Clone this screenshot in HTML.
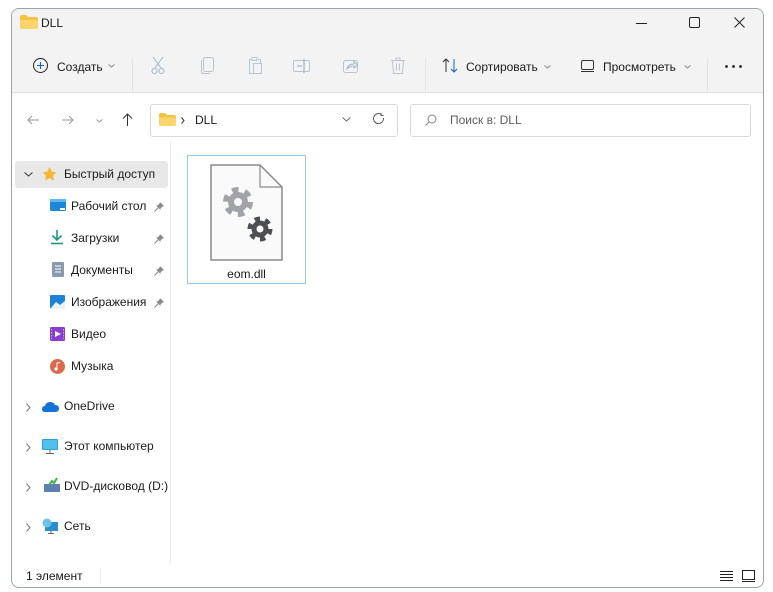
<!DOCTYPE html>
<html><head><meta charset="utf-8"><style>
*{box-sizing:border-box;margin:0;padding:0}
body{width:773px;height:592px;background:#fff;position:relative;overflow:hidden;font-family:"Segoe UI","Liberation Sans",sans-serif;font-size:12px;color:#1a1a1a}
.win{position:absolute;left:11px;top:8px;width:753px;height:580px;border:1px solid #9aa3ab;border-radius:8px;background:#fff;overflow:hidden}
.top{position:absolute;left:0;top:0;width:100%;height:84px;background:#f3f3f3;border-bottom:1px solid #e1e1e1}
.a{position:absolute;white-space:nowrap}
svg{position:absolute;overflow:visible}
.sep{position:absolute;width:1px;background:#e3e3e3}
.box{position:absolute;border:1px solid #d9d9d9;background:#fff;border-radius:3px}
</style></head><body>
<div class="win">
<div class="top"></div>
<svg style="left:8px;top:6px" width="18" height="14"><path d="M0 2 Q0 0 2 0 H6 L8 2 H16 Q18 2 18 4 V12 Q18 14 16 14 H2 Q0 14 0 12Z" fill="#f5c242"/><path d="M0 5 H18 V12 Q18 14 16 14 H2 Q0 14 0 12Z" fill="#fbd56b"/></svg>
<div class="a" style="left:29px;top:7px;font-size:12px">DLL</div>
<svg style="left:624px;top:14px" width="12" height="2"><line x1="0" y1="0.5" x2="11" y2="0.5" stroke="#222"/></svg>
<svg style="left:677px;top:8px" width="11" height="11"><rect x="0.5" y="0.5" width="10" height="10" rx="1.5" fill="none" stroke="#222"/></svg>
<svg style="left:722px;top:8px" width="11" height="11"><path d="M0.5 0.5L10.5 10.5M10.5 0.5L0.5 10.5" stroke="#222"/></svg>
<svg style="left:21px;top:49px" width="15" height="15"><circle cx="7.5" cy="7.5" r="7" fill="none" stroke="#222"/><path d="M7.5 4V11M4 7.5H11" stroke="#0a64c8" stroke-width="1.1"/></svg>
<div class="a" style="left:45px;top:51px">Создать</div>
<svg style="left:96px;top:55px" width="7" height="4"><path d="M0.5 0.5L3.5 3L6.5 0.5" fill="none" stroke="#888"/></svg>
<div class="sep" style="left:120px;top:50px;height:32px"></div>
<svg style="left:139px;top:48px" width="14" height="17"><path d="M2 0L10 11M12 0L4 11" stroke="#9cb6cf"/><circle cx="3.5" cy="14" r="2.5" fill="none" stroke="#9cb6cf"/><circle cx="10.5" cy="14" r="2.5" fill="none" stroke="#9cb6cf"/></svg>
<svg style="left:189px;top:48px" width="13" height="17"><rect x="2.5" y="0.5" width="10" height="14" rx="2" fill="none" stroke="#b8c4d0"/><path d="M0.5 3V15Q0.5 16.5 2 16.5H9" fill="none" stroke="#b8c4d0"/></svg>
<svg style="left:236px;top:48px" width="14" height="17"><path d="M3 2.5H1.5V16.5H5M10 2.5H12.5V6" fill="none" stroke="#b8c4d0"/><rect x="4" y="0.5" width="5" height="3" fill="none" stroke="#b8c4d0"/><rect x="5.5" y="6.5" width="8" height="10" fill="none" stroke="#b8c4d0"/></svg>
<svg style="left:281px;top:50px" width="18" height="14"><rect x="0.5" y="1.5" width="16" height="11" rx="1.5" fill="none" stroke="#b8c4d0"/><path d="M4 7H9M11 0V14" stroke="#9cb6cf" stroke-width="1.2"/></svg>
<svg style="left:331px;top:49px" width="16" height="15"><rect x="0.5" y="2.5" width="14" height="12" rx="2" fill="none" stroke="#b8c4d0"/><path d="M4 11Q5 6 11 6V3.5L14.5 7L11 10V8Q7 8 4 11Z" fill="none" stroke="#9cb6cf"/></svg>
<svg style="left:379px;top:48px" width="14" height="17"><path d="M0 3.5H14M5 3.5V1H9V3.5M1.5 3.5L2.5 16.5H11.5L12.5 3.5M5.5 6.5V13.5M8.5 6.5V13.5" fill="none" stroke="#b8c4d0"/></svg>
<div class="sep" style="left:413px;top:50px;height:32px"></div>
<svg style="left:430px;top:49px" width="17" height="15"><path d="M4 14V1M1 4L4 1L7 4" fill="none" stroke="#333"/><path d="M12 1V14M9 11L12 14L15 11" fill="none" stroke="#0a64c8"/></svg>
<div class="a" style="left:454px;top:51px">Сортировать</div>
<svg style="left:532px;top:56px" width="7" height="4"><path d="M0.5 0.5L3.5 3L6.5 0.5" fill="none" stroke="#888"/></svg>
<svg style="left:569px;top:51px" width="14" height="12"><rect x="0.5" y="0.5" width="12" height="9" rx="1.5" fill="none" stroke="#333"/><line x1="0" y1="11.5" x2="13" y2="11.5" stroke="#333"/></svg>
<div class="a" style="left:591px;top:51px">Просмотреть</div>
<svg style="left:672px;top:56px" width="7" height="4"><path d="M0.5 0.5L3.5 3L6.5 0.5" fill="none" stroke="#888"/></svg>
<div class="sep" style="left:695px;top:50px;height:32px"></div>
<svg style="left:713px;top:56px" width="18" height="3"><circle cx="1.5" cy="1.5" r="1.4" fill="#222"/><circle cx="8.5" cy="1.5" r="1.4" fill="#222"/><circle cx="15.5" cy="1.5" r="1.4" fill="#222"/></svg>
<svg style="left:15px;top:106px" width="13" height="10"><path d="M12 5H1M5 1L1 5L5 9" fill="none" stroke="#999"/></svg>
<svg style="left:50px;top:106px" width="13" height="10"><path d="M0 5H11M7 1L11 5L7 9" fill="none" stroke="#999"/></svg>
<svg style="left:84px;top:110px" width="7" height="4"><path d="M0.5 0.5L3.5 3L6.5 0.5" fill="none" stroke="#999"/></svg>
<svg style="left:110px;top:104px" width="11" height="13"><path d="M5.5 13V1M1 5.5L5.5 1L10 5.5" fill="none" stroke="#333"/></svg>
<div class="box" style="left:138px;top:95px;width:248px;height:33px"></div>
<svg style="left:147px;top:104px" width="17" height="13"><path d="M0 2 Q0 0 2 0 H6 L8 2 H15 Q17 2 17 4 V11 Q17 13 15 13 H2 Q0 13 0 11Z" fill="#f5c242"/><path d="M0 4.5 H17 V11 Q17 13 15 13 H2 Q0 13 0 11Z" fill="#fbd56b"/></svg>
<svg style="left:169px;top:108px" width="4" height="7"><path d="M0.5 0.5L3 3.5L0.5 6.5" fill="none" stroke="#333"/></svg>
<div class="a" style="left:183px;top:104px">DLL</div>
<svg style="left:330px;top:108px" width="9" height="5"><path d="M0.5 0.5L4.5 4L8.5 0.5" fill="none" stroke="#666"/></svg>
<svg style="left:361px;top:104px" width="12" height="12"><path d="M10.5 5A5 5 0 1 1 8 1.2M8 0V2.5H10.5" fill="none" stroke="#555"/></svg>
<div class="box" style="left:398px;top:95px;width:341px;height:33px"></div>
<svg style="left:413px;top:105px" width="12" height="12"><circle cx="7" cy="5" r="4" fill="none" stroke="#888"/><path d="M4 8L0.5 11.5" stroke="#888"/></svg>
<div class="a" style="left:438px;top:104px;color:#5d5d5d">Поиск в: DLL</div>
<div class="sep" style="left:158px;top:132px;height:423px;background:#ececec"></div>
<div class="a" style="left:3px;top:152px;width:153px;height:27px;background:#e8e8e8;border-radius:3px"></div>
<svg style="left:12px;top:163px" width="9" height="5"><path d="M0.5 0.5L4.5 4L8.5 0.5" fill="none" stroke="#333"/></svg>
<svg style="left:30px;top:158px" width="15" height="14"><path d="M7.5 0L9.7 4.6L14.5 5.2L11 8.6L11.9 13.5L7.5 11.1L3.1 13.5L4 8.6L0.5 5.2L5.3 4.6Z" fill="#f7b733"/></svg>
<div class="a" style="left:52px;top:158px">Быстрый доступ</div>
<svg style="left:38px;top:190px" width="16" height="13"><rect width="16" height="12" rx="1.5" fill="#1e88d8"/><rect x="0" y="0" width="16" height="3" fill="#63b6f0"/><rect x="10" y="9" width="5" height="2" fill="#fff"/></svg>
<div class="a" style="left:59px;top:190px">Рабочий стол</div>
<svg style="left:38px;top:221px" width="14" height="15"><path d="M7 0V10M2.5 5.5L7 10L11.5 5.5" fill="none" stroke="#1a9b7c" stroke-width="1.6"/><path d="M1 13.5H13" stroke="#1a9b7c" stroke-width="1.6"/></svg>
<div class="a" style="left:59px;top:222px">Загрузки</div>
<svg style="left:40px;top:253px" width="12" height="15"><rect width="12" height="15" rx="1" fill="#8b9aaf"/><path d="M3 4H9M3 7H9M3 10H9" stroke="#fff"/></svg>
<div class="a" style="left:59px;top:254px">Документы</div>
<svg style="left:38px;top:286px" width="15" height="14"><rect width="15" height="14" rx="1" fill="#1f82d6"/><path d="M0 14L6 7L10 10L15 6V14Z" fill="#e7f2fb"/></svg>
<div class="a" style="left:59px;top:286px">Изображения</div>
<svg style="left:38px;top:318px" width="15" height="14"><rect width="15" height="14" rx="1.5" fill="#8b3fd1"/><path d="M5 4L11 7L5 10Z" fill="#fff"/><path d="M1.5 2V12M13.5 2V12" stroke="#c9a2ef" stroke-dasharray="1.5 1.5"/></svg>
<div class="a" style="left:59px;top:318px">Видео</div>
<svg style="left:38px;top:350px" width="15" height="15"><circle cx="7.5" cy="7.5" r="7.5" fill="#d96a4e"/><path d="M7 10V4L10 3.5" fill="none" stroke="#fff"/><circle cx="6" cy="10" r="1.6" fill="#fff"/></svg>
<div class="a" style="left:59px;top:350px">Музыка</div>
<svg style="left:142px;top:193px" width="10" height="10"><path d="M6 0L10 4L8.5 4.5L6.5 6.5L6.5 8L2 3.5L3.5 3.5L5.5 1.5Z" fill="#8a8a8a"/><path d="M4 6L0.5 9.5" stroke="#8a8a8a"/></svg>
<svg style="left:142px;top:225px" width="10" height="10"><path d="M6 0L10 4L8.5 4.5L6.5 6.5L6.5 8L2 3.5L3.5 3.5L5.5 1.5Z" fill="#8a8a8a"/><path d="M4 6L0.5 9.5" stroke="#8a8a8a"/></svg>
<svg style="left:142px;top:257px" width="10" height="10"><path d="M6 0L10 4L8.5 4.5L6.5 6.5L6.5 8L2 3.5L3.5 3.5L5.5 1.5Z" fill="#8a8a8a"/><path d="M4 6L0.5 9.5" stroke="#8a8a8a"/></svg>
<svg style="left:142px;top:289px" width="10" height="10"><path d="M6 0L10 4L8.5 4.5L6.5 6.5L6.5 8L2 3.5L3.5 3.5L5.5 1.5Z" fill="#8a8a8a"/><path d="M4 6L0.5 9.5" stroke="#8a8a8a"/></svg>
<svg style="left:14px;top:394px" width="5" height="9"><path d="M0.5 0.5L4 4.5L0.5 8.5" fill="none" stroke="#777"/></svg>
<svg style="left:30px;top:392px" width="17" height="11"><path d="M3 11Q0 11 0 8Q0 5 3 5Q4 1 8 1Q12 1 13 4Q17 4 17 7.5Q17 11 13 11Z" fill="#1473d6"/></svg>
<div class="a" style="left:52px;top:390px">OneDrive</div>
<svg style="left:14px;top:434px" width="5" height="9"><path d="M0.5 0.5L4 4.5L0.5 8.5" fill="none" stroke="#777"/></svg>
<svg style="left:30px;top:430px" width="16" height="16"><rect width="16" height="11" rx="1" fill="#27a3d8"/><rect x="1" y="1" width="14" height="9" fill="#4fc1ea"/><path d="M8 11V14M4 14.5H12" stroke="#666"/></svg>
<div class="a" style="left:52px;top:430px">Этот компьютер</div>
<svg style="left:14px;top:474px" width="5" height="9"><path d="M0.5 0.5L4 4.5L0.5 8.5" fill="none" stroke="#777"/></svg>
<svg style="left:32px;top:469px" width="16" height="14"><rect x="0" y="6" width="16" height="8" fill="#5d7fb2"/><path d="M5 7L8 3L10 5L13 0" fill="none" stroke="#3bb34a" stroke-width="2"/></svg>
<div class="a" style="left:52px;top:470px">DVD-дисковод (D:)</div>
<svg style="left:14px;top:514px" width="5" height="9"><path d="M0.5 0.5L4 4.5L0.5 8.5" fill="none" stroke="#777"/></svg>
<svg style="left:30px;top:509px" width="16" height="16"><rect x="3" y="4" width="13" height="9" fill="#2a8ecf"/><circle cx="5" cy="5" r="4.5" fill="#6cc3e8"/><path d="M9 13V15M6 15.5H12" stroke="#666"/></svg>
<div class="a" style="left:52px;top:510px">Сеть</div>
<div class="a" style="left:175px;top:146px;width:119px;height:129px;border:1px solid #8fcaf0;background:#fff"></div>
<svg style="left:198px;top:155px" width="74" height="97"><path d="M1 1H50L72 23V96H1Z" fill="#fafafa" stroke="#8a8a8a" stroke-width="1.5"/><path d="M50 1V23H72" fill="none" stroke="#8a8a8a" stroke-width="1.2"/>
<circle cx="28" cy="38" r="12" fill="none" stroke="#a2a3a8" stroke-width="6" stroke-dasharray="6.3 6.3"/><circle cx="28" cy="38" r="10" fill="#a2a3a8"/><circle cx="28" cy="38" r="4" fill="#fafafa"/>
<circle cx="50" cy="65" r="10" fill="none" stroke="#4d4f53" stroke-width="5" stroke-dasharray="5.2 5.2"/><circle cx="50" cy="65" r="8.5" fill="#4d4f53"/><circle cx="50" cy="65" r="3.5" fill="#fafafa"/></svg>
<div class="a" style="left:175px;top:258px;width:119px;text-align:center">eom.dll</div>
<div class="a" style="left:14px;top:560px">1 элемент</div>
<div class="sep" style="left:88px;top:560px;height:14px;background:#eee"></div>
<svg style="left:708px;top:562px" width="14" height="11"><path d="M0 0.5H13M0 3.5H13M0 6.5H13M0 9.5H13" stroke="#222"/></svg>
<svg style="left:730px;top:561px" width="13" height="12"><rect x="0.5" y="0.5" width="12" height="9" fill="none" stroke="#222"/><line x1="0" y1="11.5" x2="13" y2="11.5" stroke="#222"/></svg>
</div>
</body></html>
